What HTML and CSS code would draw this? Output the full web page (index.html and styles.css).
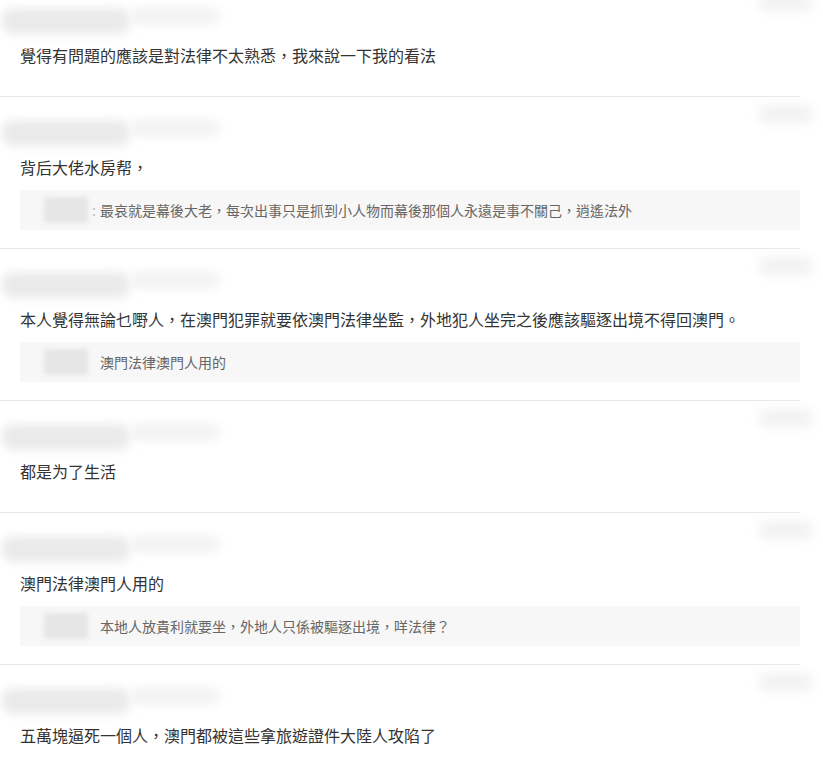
FILE: index.html
```html
<!DOCTYPE html>
<html lang="zh-Hant">
<head>
<meta charset="utf-8">
<title>評論</title>
<link rel="stylesheet" href="styles.css">
</head>
<body>
<div class="list">
  <div class="item first">
    <div class="head">
      <span class="blob name"></span><span class="blob date"></span>
      <span class="blob side"></span>
    </div>
    <p class="text">覺得有問題的應該是對法律不太熟悉，我來說一下我的看法</p>
  </div>

  <div class="item">
    <div class="head">
      <span class="blob name"></span><span class="blob date"></span>
      <span class="blob side"></span>
    </div>
    <p class="text">背后大佬水房帮，</p>
    <div class="reply">
      <span class="blob rname"></span><span class="colon">:</span>
      <span class="rtext">最哀就是幕後大老，每次出事只是抓到小人物而幕後那個人永遠是事不關己，逍遙法外</span>
    </div>
  </div>

  <div class="item">
    <div class="head">
      <span class="blob name"></span><span class="blob date"></span>
      <span class="blob side"></span>
    </div>
    <p class="text">本人覺得無論乜嘢人，在澳門犯罪就要依澳門法律坐監，外地犯人坐完之後應該驅逐出境不得回澳門。</p>
    <div class="reply">
      <span class="blob rname"></span><span class="colon"></span>
      <span class="rtext">澳門法律澳門人用的</span>
    </div>
  </div>

  <div class="item">
    <div class="head">
      <span class="blob name"></span><span class="blob date"></span>
      <span class="blob side"></span>
    </div>
    <p class="text">都是为了生活</p>
  </div>

  <div class="item">
    <div class="head">
      <span class="blob name"></span><span class="blob date"></span>
      <span class="blob side"></span>
    </div>
    <p class="text">澳門法律澳門人用的</p>
    <div class="reply">
      <span class="blob rname"></span><span class="colon"></span>
      <span class="rtext">本地人放貴利就要坐，外地人只係被驅逐出境，咩法律？</span>
    </div>
  </div>

  <div class="item">
    <div class="head">
      <span class="blob name"></span><span class="blob date"></span>
      <span class="blob side"></span>
    </div>
    <p class="text">五萬塊逼死一個人，澳門都被這些拿旅遊證件大陸人攻陷了</p>
  </div>
</div>
</body>
</html>
```

FILE: styles.css
```css
html, body {
  margin: 0;
  padding: 0;
  background: #ffffff;
  overflow: hidden;
}

body {
  font-family: "Noto Sans CJK TC", "Noto Sans CJK SC", "Liberation Sans", sans-serif;
  color: #333333;
}

.list {
  width: 800px;
  margin-top: -15px;
}

.item {
  padding: 18px 0 18px 20px;
  border-bottom: 1px solid #e8e8e8;
}

.head {
  display: flex;
  align-items: center;
  height: 32px;
  margin-bottom: 8px;
}

.blob {
  display: block;
  border-radius: 10px;
  filter: blur(5px);
}

.name {
  width: 128px;
  height: 26px;
  margin-left: -18px;
  margin-top: 4px;
  background: #eaeaea;
}

.date {
  width: 90px;
  height: 18px;
  margin-top: -6px;
  background: #f3f3f3;
}

.side {
  width: 56px;
  height: 20px;
  margin-left: auto;
  margin-right: -14px;
  margin-top: -34px;
  background: #f3f3f3;
}

.text {
  margin: 0 0 11px;
  font-size: 16px;
  line-height: 24px;
  color: #333333;
  white-space: nowrap;
}

.reply {
  display: flex;
  align-items: center;
  height: 40px;
  background: #f7f7f7;
  font-size: 14px;
  color: #666666;
}

.rname {
  width: 44px;
  height: 26px;
  margin-left: 24px;
  border-radius: 3px;
  filter: blur(2px);
  background: #e6e6e6;
}

.colon {
  width: 12px;
  color: #bbbbbb;
  text-align: center;
}

.rtext {
  white-space: nowrap;
}
```
